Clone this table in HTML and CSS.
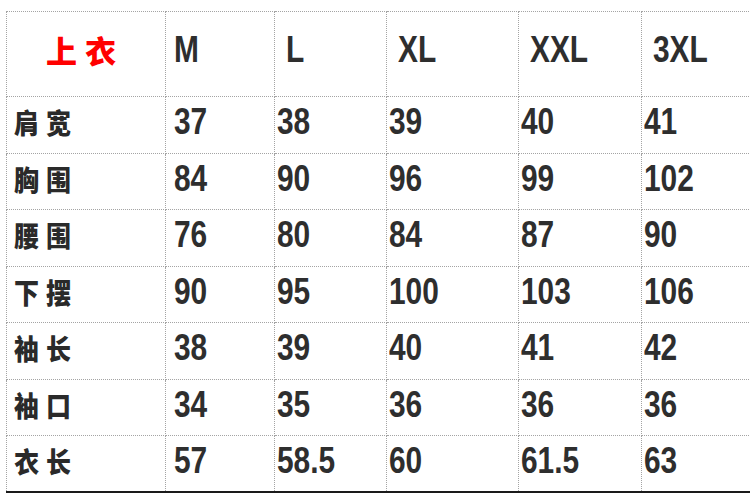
FILE: index.html
```html
<!DOCTYPE html>
<html lang="zh">
<head>
<meta charset="utf-8">
<link rel="stylesheet" href="styles.css">
</head>
<body>
<table class="size-table">
  <colgroup>
    <col class="c0"><col class="c1"><col class="c2"><col class="c3"><col class="c4"><col class="c5">
  </colgroup>
  <thead>
    <tr class="head">
      <th class="title">上衣</th>
      <th class="first"><span class="v">M</span></th>
      <th><span class="v">L</span></th>
      <th><span class="v">XL</span></th>
      <th><span class="v">XXL</span></th>
      <th><span class="v">3XL</span></th>
    </tr>
  </thead>
  <tbody>
    <tr><td class="label"><span class="lv">肩宽</span></td><td class="first"><span class="v">37</span></td><td><span class="v">38</span></td><td><span class="v">39</span></td><td><span class="v">40</span></td><td><span class="v">41</span></td></tr>
    <tr><td class="label"><span class="lv">胸围</span></td><td class="first"><span class="v">84</span></td><td><span class="v">90</span></td><td><span class="v">96</span></td><td><span class="v">99</span></td><td><span class="v">102</span></td></tr>
    <tr><td class="label"><span class="lv">腰围</span></td><td class="first"><span class="v">76</span></td><td><span class="v">80</span></td><td><span class="v">84</span></td><td><span class="v">87</span></td><td><span class="v">90</span></td></tr>
    <tr><td class="label"><span class="lv">下摆</span></td><td class="first"><span class="v">90</span></td><td><span class="v">95</span></td><td><span class="v">100</span></td><td><span class="v">103</span></td><td><span class="v">106</span></td></tr>
    <tr><td class="label"><span class="lv">袖长</span></td><td class="first"><span class="v">38</span></td><td><span class="v">39</span></td><td><span class="v">40</span></td><td><span class="v">41</span></td><td><span class="v">42</span></td></tr>
    <tr><td class="label"><span class="lv">袖口</span></td><td class="first"><span class="v">34</span></td><td><span class="v">35</span></td><td><span class="v">36</span></td><td><span class="v">36</span></td><td><span class="v">36</span></td></tr>
    <tr class="last"><td class="label"><span class="lv">衣长</span></td><td class="first"><span class="v">57</span></td><td><span class="v">58.5</span></td><td><span class="v">60</span></td><td><span class="v">61.5</span></td><td><span class="v">63</span></td></tr>
  </tbody>
</table>
</body>
</html>
```

FILE: styles.css
```css
html, body {
  margin: 0;
  padding: 0;
  background: #fff;
  overflow: hidden;
  width: 750px;
  height: 499px;
}

.size-table {
  margin: 11px 0 0 6px;
  border-collapse: collapse;
  table-layout: fixed;
  width: 780px;
  font-family: "Liberation Sans", Arial, sans-serif;
  font-weight: bold;
  color: #2e2e2e;
}

.c0 { width: 159px; }
.c1 { width: 109px; }
.c2 { width: 112px; }
.c3 { width: 132px; }
.c4 { width: 123px; }
.c5 { width: 145px; }

.size-table th,
.size-table td {
  border: 1px dotted #a4a4a4;
  padding: 0 0 5px 2px;
  text-align: left;
  vertical-align: middle;
  font-size: 36px;
  line-height: 40px;
  white-space: nowrap;
}

.v {
  display: inline-block;
  transform: scaleX(0.83);
  transform-origin: left center;
}

.lv {
  display: inline-block;
  transform: scaleY(1.12);
  transform-origin: left center;
}

.size-table .head th {
  height: 76px;
  padding-left: 11px;
  padding-bottom: 8px;
}

.size-table tbody tr {
  height: 56.5px;
}

.size-table .first,
.size-table .head .first {
  padding-left: 8px;
}

.size-table .head .title {
  color: #ff0000;
  text-align: left;
  font-family: "Noto Sans CJK SC", sans-serif;
  font-weight: 900;
  font-size: 31px;
  letter-spacing: 8px;
  padding-left: 39px;
}

.size-table .label {
  font-family: "Noto Sans CJK SC", sans-serif;
  font-weight: 900;
  font-size: 25px;
  letter-spacing: 7px;
  padding-left: 7px;
  color: #2a2a2a;
}

.size-table .last td {
  border-bottom: 2px solid #1a1a1a;
}
```
